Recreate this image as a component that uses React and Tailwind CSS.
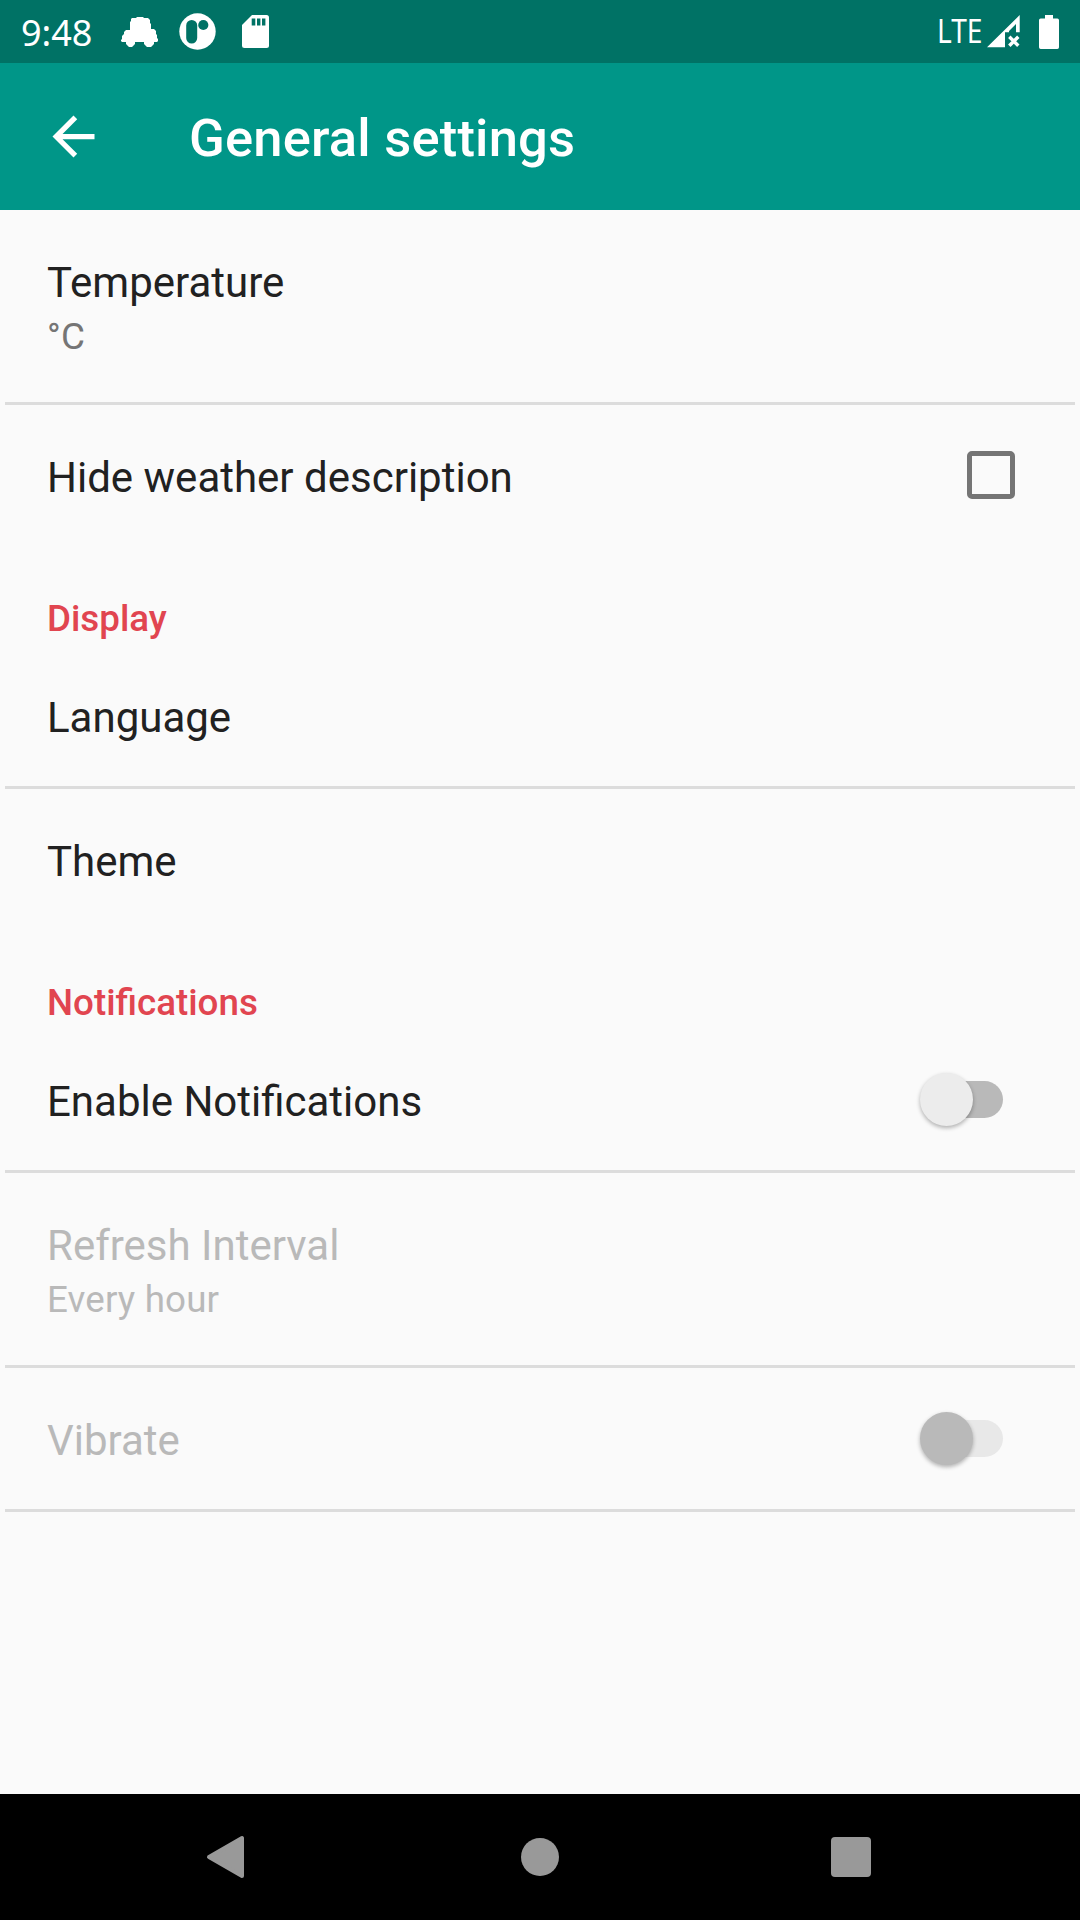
function CarIcon() {
  return (
    <svg className="h-[30px] w-[38px]" viewBox="0 0 38 30" fill="#fff">
      <path d="M15 1 16 0h6l1 1h4l2 2v3l1 1v5h3l2 2v3l1 1v3l1 1v2l-1 1h-3v2l-3 3h-4l-3-3v-2H14v2l-3 3H8l-3-3v-2H1l-1-1v-1l1-1v-3l2-2v-2l2-2h4V5l1-1V2l1-1z" />
    </svg>
  );
}

function PIcon() {
  return (
    <svg className="size-[37px]" viewBox="0 0 37 37">
      <circle cx="18.5" cy="18.5" r="18.2" fill="#fff" />
      <rect x="7.2" y="7" width="11" height="23.5" rx="5.5" fill="#007265" />
      <circle cx="24.3" cy="12" r="5.1" fill="#007265" />
    </svg>
  );
}

function SdIcon() {
  return (
    <svg className="h-[33px] w-[27px]" viewBox="0 0 27 33">
      <path d="M10 0h14.500a2.500 2.500 0 0 1 2.500 2.500v28a2.500 2.500 0 0 1-2.500 2.500H2.500a2.500 2.500 0 0 1-2.500-2.500V10z" fill="#fff" />
      <path d="M9.700 3.500h3.600v7H9.700zM15 3.500h3.400v7H15zM20 3.500h3.400v7H20z" fill="#007265" />
    </svg>
  );
}

function SignalIcon() {
  return (
    <svg className="h-[33px] w-[33px]" viewBox="0 0 33 33">
      <path d="M0 32.300 32.700 0v17.300H29V9l-7 7v1.300h-4v15z" fill="#fff" />
      <path d="m22.300 21.700 9 9m0-9-9 9" stroke="#fff" strokeWidth="3.400" />
    </svg>
  );
}

function BatteryIcon() {
  return (
    <svg className="h-[34px] w-[20px]" viewBox="0 0 20 34" fill="#fff">
      <path d="M6 0h8v3.500h4.300A1.700 1.700 0 0 1 20 5.200v27a1.700 1.700 0 0 1-1.700 1.700H1.700A1.700 1.700 0 0 1 0 32.200v-27a1.700 1.700 0 0 1 1.700-1.700H6z" />
    </svg>
  );
}

function StatusBar() {
  return (
    <div className="flex h-[63px] items-center justify-between bg-[#007265] pr-[21px] pl-[21px] font-['Noto_Sans',sans-serif] text-white">
      <div className="flex items-center">
        <span className="w-[100px] origin-left scale-x-[0.98] pt-[2px] text-[36.75px] leading-[43px]">9:48</span>
        <CarIcon />
        <div className="ml-5"><PIcon /></div>
        <div className="ml-[26px]"><SdIcon /></div>
      </div>
      <div className="flex items-center">
        <span className="w-[50px] origin-left scale-x-[0.88] pb-[2px] text-[32px] leading-[38px]">LTE</span>
        <SignalIcon />
        <div className="ml-[19px]"><BatteryIcon /></div>
      </div>
    </div>
  );
}

function Toolbar() {
  return (
    <header className="flex h-[147px] items-center bg-[#009688] pl-[42px] text-white">
      <svg className="size-[63px]" viewBox="0 0 24 24" fill="currentColor">
        <path d="M20 11H7.830l5.590-5.590L12 4l-8 8 8 8 1.410-1.410L7.830 13H20v-2z" />
      </svg>
      <h1 className="ml-[84px] pt-[3px] text-[52.5px] leading-[62px] font-medium tracking-[0.2px]">General settings</h1>
    </header>
  );
}

function Section({ children }) {
  return (
    <h2 className="h-[99px] pt-[51px] pl-[47px] text-[36.75px] leading-[43px] font-medium text-[#e14550]">
      {children}
    </h2>
  );
}

function Row({ title, summary, disabled, divider, children }) {
  return (
    <div>
      <div
        className={`flex items-center justify-between pl-[47px] ${summary ? "h-[192px]" : "h-[141px]"} ${
          disabled ? "text-[#b9b9b9]" : "text-[#212121]"
        }`}
      >
        <div className="pt-1">
          <div className="text-[42px] leading-[49px]">{title}</div>
          {summary && (
            <div className={`mt-2 text-[36.75px] leading-[43px] tracking-[0.15px] ${disabled ? "" : "text-[#757575]"}`}>
              {summary}
            </div>
          )}
        </div>
        {children}
      </div>
      {divider && <div className="mx-[5px] h-[3px] bg-[#dcdcdc]" />}
    </div>
  );
}

function Switch({ disabled }) {
  return (
    <div className="mr-[77px] flex h-[53px] w-[83px] items-center">
      <div
        className={`z-10 size-[53px] shrink-0 rounded-full shadow-[0_2px_4px_rgba(0,0,0,0.3)] ${
          disabled ? "bg-[#b9b9b9]" : "bg-[#ececec]"
        }`}
      />
      <div className={`-ml-[27px] h-[37px] grow rounded-r-full ${disabled ? "bg-[#e8e8e8]" : "bg-[#b9b9b9]"}`} />
    </div>
  );
}

function NavBar() {
  return (
    <nav className="flex h-[126px] items-center justify-between bg-black pr-[209px] pl-[206px]">
      <svg className="h-[44px] w-[39px]" viewBox="0 0 39 44">
        <path d="M3 22 36 3v38z" fill="#999" stroke="#999" strokeWidth="4" strokeLinejoin="round" />
      </svg>
      <div className="ml-[4px] size-[38px] rounded-full bg-[#999]" />
      <div className="size-[40px] rounded-[4px] bg-[#999]" />
    </nav>
  );
}

export default function App() {
  return (
    <div className="flex h-[1920px] w-[1080px] flex-col overflow-hidden bg-[#fafafa] font-[Roboto,sans-serif]">
      <StatusBar />
      <Toolbar />
      <main className="grow">
        <Row title="Temperature" summary="°C" divider />
        <Row title="Hide weather description">
          <div className="mr-[65px] mb-px size-[48px] rounded-[5px] border-[5px] border-[#757575]" />
        </Row>
        <Section>Display</Section>
        <Row title="Language" divider />
        <Row title="Theme" />
        <Section>Notifications</Section>
        <Row title="Enable Notifications" divider>
          <Switch />
        </Row>
        <Row title="Refresh Interval" summary="Every hour" disabled divider />
        <Row title="Vibrate" disabled divider>
          <Switch disabled />
        </Row>
      </main>
      <NavBar />
    </div>
  );
}
